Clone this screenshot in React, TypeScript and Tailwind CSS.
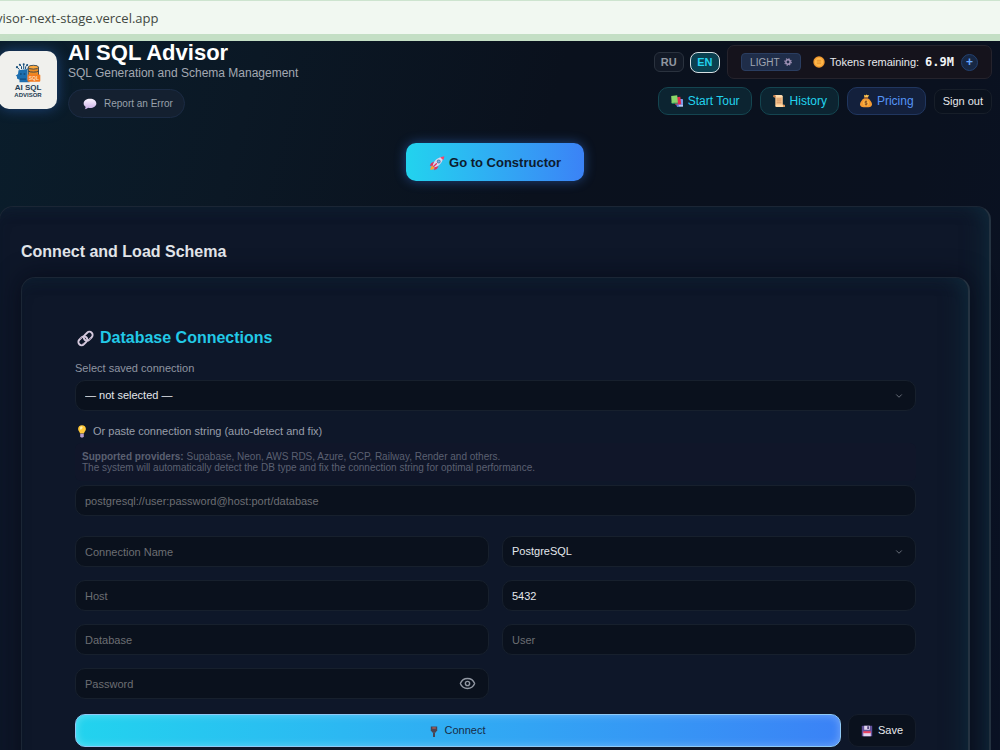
import type { ReactNode } from "react";
import { ChevronDown, Eye } from "lucide-react";

const BubbleIcon = () => (
  <svg viewBox="0 0 16 14" className="h-3 w-3.5" aria-hidden="true">
    <defs>
      <linearGradient id="bubble" x1="0" y1="0" x2="0" y2="1">
        <stop offset="0" stopColor="#fbf4ff" />
        <stop offset="1" stopColor="#c9aee6" />
      </linearGradient>
    </defs>
    <path fill="url(#bubble)" d="M8 1c4.2 0 7.4 2.400 7.400 5.400S12.200 11.800 8 11.800c-.8 0-1.500-.1-2.200-.3C4.800 12.500 3.400 13 1.900 13c.8-.9 1.100-1.700.9-2.800C1.300 9.300.6 7.900.6 6.400.6 3.400 3.800 1 8 1z" />
  </svg>
);

const CardsIcon = () => (
  <svg viewBox="0 0 14 14" className="h-3.5 w-3.5" aria-hidden="true">
    <rect x="7.500" y="5" width="5.500" height="7.500" rx=".6" fill="#7d9be8" />
    <path fill="#b7c8f2" d="M8.500 11h4.500v1.500H8.500z" />
    <path fill="#e5284f" d="M4.500 3.400l5.800-.7.9 7.600-5.800.8z" />
    <path fill="#2f9e68" d="M1.500 8.500h6.500v1.300H1.800z" />
    <path fill="#88d66a" d="M1.200 2l6-.7.7 7.300-6.300.5z" />
    <path fill="#5f7ed6" d="M6 10.500h2.600V13H7.200z" />
  </svg>
);

const ScrollIcon = () => (
  <svg viewBox="0 0 14 14" className="h-3.5 w-3.5" aria-hidden="true">
    <path fill="#f6c48f" d="M3.300 2h7.500v9.500H3.300z" />
    <rect x="1.500" y="1" width="9" height="2.200" rx="1.100" fill="#ffdcae" />
    <circle cx="2.500" cy="2.300" r="1.200" fill="#c77a45" />
    <rect x="3.300" y="10.800" width="9.700" height="2.200" rx="1.100" fill="#ffd9a6" />
    <circle cx="12" cy="11.900" r="1.100" fill="#d98d54" />
    <path stroke="#c48250" strokeWidth=".7" d="M4.700 5h4.700M4.700 6.900h4.700M4.700 8.800h4.700" />
  </svg>
);

const MoneyIcon = () => (
  <svg viewBox="0 0 14 14" className="h-3.5 w-3.5" aria-hidden="true">
    <path fill="#f59a32" d="M5.200 4.200h3.600c2.500 1.700 4.200 4 4.200 6 0 2-1.500 3-3.500 3h-5c-2 0-3.500-1-3.500-3 0-2 1.700-4.300 4.200-6z" />
    <path fill="#ffc44f" d="M5 .8l1.300.6L7.500.5l1 .8 1.500-.2-1.200 2.600H5.400z" />
    <rect x="4.800" y="3.300" width="4.400" height="1.300" rx=".6" fill="#9a5a32" />
    <circle cx="7" cy="9" r="2.900" fill="#ffb844" />
    <path fill="none" stroke="#7a4320" strokeWidth=".9" d="M8.200 7.700c-.7-.7-2.400-.5-2.400.4 0 1.200 2.500.6 2.500 1.800 0 1-1.800 1-2.600.3M7 6.600v4.800" />
  </svg>
);

const RocketIcon = () => (
  <svg viewBox="0 0 16 16" className="h-4 w-4" aria-hidden="true">
    <path fill="#ff9d2e" d="M1.300 14.800c0-2 .8-3.900 2.600-4.300l1.800 1.700c-.4 1.800-2.300 2.600-4.400 2.600z" />
    <path fill="#e0315f" d="M5 6.500L2 8.300.8 11l3.500-.6zM9.600 11.200L7.800 14l-2.700 1.200.5-3.400z" />
    <path fill="#dcd5ea" d="M3.800 10.400C4.600 6.300 8.300 2.500 13 2l1 1c-.5 4.700-4.200 8.300-8.400 9.200z" />
    <path fill="#f0466e" d="M11.300 2.400c1.100-.6 2.700-1.100 4-1.200 0 1.200-.5 2.700-1.100 3.900z" />
    <circle cx="9.700" cy="6.500" r="1.900" fill="#5c7ca8" />
    <circle cx="9.700" cy="6.500" r="1.100" fill="#60b7ef" />
    <path stroke="#e0315f" strokeWidth="1.300" strokeLinecap="round" d="M7.400 8.700l-2.600 2.600" />
  </svg>
);

const ChainIcon = () => (
  <svg viewBox="0 0 18 18" className="h-[17px] w-[17px]" fill="none" aria-hidden="true">
    <g stroke="#d5c9dd" strokeWidth="2">
      <rect x="6.600" y="3.200" width="10.500" height="6.800" rx="3.400" transform="rotate(-45 11.850 6.600)" />
      <rect x=".9" y="8" width="10.500" height="6.800" rx="3.400" transform="rotate(-45 6.150 11.400)" />
    </g>
    <path stroke="#75647f" strokeWidth=".7" d="M5.200 7.300L3.100 9.500M14.800 8.700l-2.200 2.100M7 13.700l-1.800 1.400" />
  </svg>
);

const BulbIcon = () => (
  <svg viewBox="0 0 12 14" className="h-3.5 w-3" aria-hidden="true">
    <path fill="#ffc839" d="M6 1.300c2.400 0 3.900 1.600 3.900 3.600 0 2-1.600 2.600-1.900 4.700H4c-.3-2.100-1.900-2.700-1.900-4.700 0-2 1.500-3.600 3.900-3.600z" />
    <path fill="#fff2b0" d="M4.400 3.100c.9-.8 2-.6 2.200.2.200 1-1.100 1.300-1.700 2.600-.9-.6-1.300-2-.5-2.800z" />
    <path fill="#b49bcb" d="M4.200 9.800h3.600v2.400L7 13.400H5l-.8-1.200z" />
  </svg>
);

const PlugIcon = () => (
  <svg viewBox="0 0 8 14" className="h-3.5 w-2" aria-hidden="true">
    <path fill="#4b4453" d="M.8 2.500h6.400v4L5.300 8.800H2.700L.8 6.500z" />
    <path fill="#4b4453" d="M3 8.500h2V13H3z" />
    <path fill="#a35c55" d="M2.300 3.200h3.500v1.600H2.300z" />
  </svg>
);

const FloppyIcon = () => (
  <svg viewBox="0 0 12 12" className="h-3 w-3" aria-hidden="true">
    <path fill="#62519a" d="M1.500.7h9.700v10.600H.8V1.400z" />
    <path fill="#e2d4ee" d="M3.200.7h5.600v4.100H3.200zM2.300 7.200h7.500v4.100H2.300z" />
    <path fill="#473b75" d="M6.300 1.200h1.600v2.900H6.300z" />
    <path fill="#ec4461" d="M2.300 6.200h7.500v2H2.300z" />
  </svg>
);

const CoinIcon = () => (
  <svg viewBox="0 0 12 12" className="h-3 w-3" aria-hidden="true">
    <circle cx="6" cy="6" r="5.700" fill="#f29a31" />
    <circle cx="6" cy="6" r="4.300" fill="#ffb84a" />
    <path fill="none" stroke="#e08b28" strokeWidth=".8" d="M3.800 4.300h4.400M3.800 6h4.400M3.800 7.700h4.400" />
  </svg>
);

const GearIcon = () => (
  <svg viewBox="0 0 10 10" className="h-2 w-2" fill="none" aria-hidden="true">
    <circle cx="5" cy="5" r="2.700" stroke="#a596bb" strokeWidth="1.800" />
    <circle cx="5" cy="5" r="4.100" stroke="#a596bb" strokeWidth="1.300" strokeDasharray="1.700 1.520" />
  </svg>
);

const LogoMark = () => (
  <svg viewBox="0 0 26 20" className="h-5 w-[26px]" aria-hidden="true">
    <path fill="#1d6fb0" d="M3.500 7.200L12.500 6v10.500l2 1.200v1.500H4.500v-2.500L2 15.500v-2L.7 12.800 3 11z" />
    <path fill="#124b7c" d="M5 15.500h6v1.300H5zM5 10.200h1.700v1.500H5zM8.600 10.200h1.700v1.500H8.600z" />
    <g stroke="#174e7c" strokeWidth="1" fill="none">
      <path d="M4.500 6.500L2.400 4.600M6.500 6V3.500L5 2M8.700 6V1.800M10.600 6V3.600L12 2.300M12.300 6.500l1.200-1.700" />
    </g>
    <g fill="#174e7c">
      <circle cx="2" cy="4.200" r="1.100" />
      <circle cx="4.800" cy="1.700" r="1" />
      <circle cx="8.700" cy="1.300" r="1" />
      <circle cx="12.200" cy="1.900" r="1" />
    </g>
    <path fill="#ef8b22" stroke="#1d3850" strokeWidth=".8" d="M13.300 4.300v11.400c0 1 10.200 1 10.200 0V4.300z" />
    <ellipse cx="18.400" cy="4.200" rx="5.100" ry="1.900" fill="#ffa93c" stroke="#1d3850" strokeWidth=".8" />
    <path fill="none" stroke="#1d3850" strokeWidth=".8" d="M13.300 8c1.500 1.500 8.700 1.500 10.200 0" />
    <rect x="12.500" y="11.500" width="12.800" height="7.300" rx="1" fill="#f47b20" />
    <text x="18.900" y="16.900" textAnchor="middle" fontSize="5" fontWeight="700" fill="#ffd9b5">SQL</text>
  </svg>
);

const field =
  "h-[31px] w-full rounded-[10px] border border-[#17202d] bg-[#0a111d] px-[9px] text-[11px] text-[#e4e7ec] placeholder:text-[#6c6e73] outline-none";

function Field({ label, value, type = "text" }: { label: string; value?: string; type?: string }) {
  return <input type={type} aria-label={label} placeholder={label} defaultValue={value} className={field} />;
}

function Dropdown({ id, label, option }: { id: string; label?: string; option: string }) {
  return (
    <div className="relative">
      <select id={id} aria-label={label} className={`${field} appearance-none`}>
        <option>{option}</option>
      </select>
      <ChevronDown className="pointer-events-none absolute top-[11px] right-3 h-2.5 w-2.5 text-[#7b818c]" aria-hidden="true" />
    </div>
  );
}

function NavButton({ icon, children, tone }: { icon: ReactNode; children: ReactNode; tone: string }) {
  return (
    <button type="button" className={`flex h-7 items-center gap-1 rounded-[10px] border px-[11px] text-xs ${tone}`}>
      {icon}
      {children}
    </button>
  );
}

const teal = "border-[#144550] bg-[#0c2431] text-[#22d3ee]";
const blue = "border-[#20365f] bg-[#13203c] text-[#5594f6]";

function Header() {
  return (
    <header className="flex items-start justify-between pr-2">
      <div className="flex">
        <div className="-ml-px mt-2.5 flex h-[58px] w-[58px] shrink-0 flex-col items-center justify-center rounded-[10px] bg-[#f0f0ed] text-[#1f3c54] shadow-[0_0_14px_rgba(59,130,246,0.4)]">
          <LogoMark />
          <span className="mt-px text-[8px] leading-[8px] font-bold">AI SQL</span>
          <span className="text-[6px] leading-[6px] font-bold">ADVISOR</span>
        </div>
        <div className="pl-[11px]">
          <h1 className="text-[22px] leading-6 font-bold text-white">AI SQL Advisor</h1>
          <p className="text-xs leading-4 text-[#a3a8b2]">SQL Generation and Schema Management</p>
          <button
            type="button"
            className="mt-2 flex h-[29px] items-center gap-[7px] rounded-full border border-[#1b2b44] bg-[#142030] pr-[11px] pl-3.5 text-[10px] text-[#99a0ab]"
          >
            <BubbleIcon />
            Report an Error
          </button>
        </div>
      </div>
      <div className="flex flex-col items-end gap-2 pt-1">
        <div className="flex items-center">
          <button type="button" className="h-5 w-[30px] rounded-md border border-[#2a323e] bg-[#121926] text-[11px] font-bold text-[#9096a0]">
            RU
          </button>
          <button type="button" className="ml-1.5 h-[21px] w-[30px] rounded-lg border border-[#d7dfe2] bg-[#0b4050] text-[11px] font-bold text-[#22d3ee]">
            EN
          </button>
          <div className="ml-[7px] flex h-[34px] items-center rounded-[7px] border border-[#25232c] bg-[#15131c] px-[13px]">
            <button type="button" className="flex h-[18px] w-[60px] items-center justify-center gap-1 rounded border border-[#2a3d60] bg-[#1f2d49] text-[10px] text-[#a0a6b1]">
              LIGHT
              <GearIcon />
            </button>
            <span className="ml-3 flex items-center gap-[5px] text-[11px] text-[#e7e9ed]">
              <CoinIcon />
              Tokens remaining:
            </span>
            <strong className="ml-1.5 font-['DejaVu_Sans_Mono',monospace] text-[12px] text-[#f1f3f6]">6.9M</strong>
            <button type="button" aria-label="Add tokens" className="ml-[7px] flex h-[17px] w-[17px] items-center justify-center rounded-full border border-[#234170] bg-[#172743] text-[12px] leading-3 font-bold text-[#65a5fa]">
              +
            </button>
          </div>
        </div>
        <div className="flex items-center gap-2">
          <NavButton icon={<CardsIcon />} tone={teal}>Start Tour</NavButton>
          <NavButton icon={<ScrollIcon />} tone={teal}>History</NavButton>
          <NavButton icon={<MoneyIcon />} tone={blue}>Pricing</NavButton>
          <button type="button" className="h-[25px] rounded-lg border border-[#171e29] bg-[#0a111d] px-2 text-[11px] text-[#e6e8ec]">
            Sign out
          </button>
        </div>
      </div>
    </header>
  );
}

const card = "rounded-[14px] border border-[#1b2635] border-r-2 border-r-[#253341] bg-[#0e1729]";

export default function App() {
  return (
    <div className="flex h-screen flex-col overflow-hidden bg-[#0a101d] font-['Liberation_Sans',Arial,sans-serif]">
      <div className="h-[41px] shrink-0 overflow-hidden border-t border-b-[7px] border-t-[#cde4cf] border-b-[#c4dfc5] bg-[#f1f8f1]">
        <div className="-ml-1 pt-[7px] font-['Open_Sans',sans-serif] text-[13px] leading-5 text-[#424842]">visor-next-stage.vercel.app</div>
      </div>
      <div className="min-h-0 grow bg-[linear-gradient(105deg,#0a1d2b_0%,#0b1825_22%,#0a111d_48%,#0a111f_80%,#0a1224_100%)]">
        <Header />
        <main className="mr-[9px] -ml-px">
          <div className="mt-[25px] flex justify-center">
            <button
              type="button"
              className="flex h-[38px] items-center gap-1 rounded-[10px] bg-linear-to-r from-[#22d3ee] to-[#3b82f6] px-[23px] pt-0.5 text-[13px] font-bold text-[#0d1b2e] shadow-[0_0_12px_rgba(59,130,246,0.45)]"
            >
              <RocketIcon />
              Go to Constructor
            </button>
          </div>
          <section className={`${card} mt-[25px] pr-[19px] pb-6 pl-[21px] shadow-[inset_-14px_0_22px_-10px_rgba(16,48,66,0.7),inset_0_8px_20px_-12px_rgba(16,48,66,0.35)]`}>
            <h2 className="pt-[35px] text-base leading-5 font-bold text-[#e1e4e8]">Connect and Load Schema</h2>
            <div className={`${card} mt-[15px] pt-[50px] pr-[52px] pb-12 pl-[53px] shadow-[0_0_24px_rgba(5,7,18,0.7),inset_-14px_0_22px_-10px_rgba(16,48,66,0.7),inset_0_8px_20px_-12px_rgba(16,48,66,0.35)]`}>
              <h3 className="flex items-center gap-1.5 pl-0.5 text-base leading-5 font-bold text-[#22c9e6]">
                <ChainIcon />
                Database Connections
              </h3>
              <label htmlFor="saved" className="mt-3 mb-1 block text-[11px] leading-4 text-[#8e95a1]">
                Select saved connection
              </label>
              <Dropdown id="saved" option="— not selected —" />
              <label htmlFor="uri" className="mt-3 flex items-center gap-[5px] pl-px text-[11px] leading-4 text-[#989eaa]">
                <BulbIcon />
                Or paste connection string (auto-detect and fix)
              </label>
              <p className="my-1 rounded-md bg-[#101629] px-[7px] py-2 text-[10px] leading-[11px] text-[#5b6071]">
                <strong>Supported providers:</strong> Supabase, Neon, AWS RDS, Azure, GCP, Railway, Render and others.
                <br />
                The system will automatically detect the DB type and fix the connection string for optimal performance.
              </p>
              <input id="uri" placeholder="postgresql://user:password@host:port/database" className={field} />
              <form className="mt-5">
                <div className="grid grid-cols-2 gap-[13px]">
                  <Field label="Connection Name" />
                  <Dropdown id="engine" label="Database type" option="PostgreSQL" />
                  <Field label="Host" />
                  <Field label="Port" value="5432" />
                  <Field label="Database" />
                  <Field label="User" />
                  <div className="relative">
                    <Field label="Password" type="password" />
                    <button type="button" aria-label="Show password" className="absolute top-[7px] right-[13px] text-[#9298a3]">
                      <Eye className="h-[17px] w-[17px]" />
                    </button>
                  </div>
                </div>
                <div className="mt-[15px] flex gap-[7px]">
                  <button
                    type="button"
                    className="flex h-[33px] grow items-center justify-center gap-1.5 rounded-[10px] border border-[#8fc9f6] bg-linear-to-r from-[#22d3ee] to-[#3b82f6] text-[11px] text-[#172b47] shadow-[inset_0_0_8px_rgba(255,255,255,0.3)]"
                  >
                    <PlugIcon />
                    Connect
                  </button>
                  <button
                    type="button"
                    className="flex h-[33px] items-center gap-[5px] rounded-[10px] border border-[#151d2b] bg-[#0a111d] px-3 text-[11px] text-[#e7e9ed]"
                  >
                    <FloppyIcon />
                    Save
                  </button>
                </div>
              </form>
            </div>
          </section>
        </main>
      </div>
    </div>
  );
}
